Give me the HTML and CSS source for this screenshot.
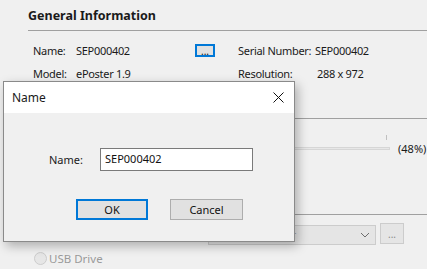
FILE: index.html
```html
<!DOCTYPE html>
<html lang="en">
<head>
    <meta charset="UTF-8">
    <title>Device settings</title>
    <link rel="stylesheet" href="styles.css">
</head>
<body>
    <div class="page">
        <h2 class="group-title">General Information</h2>
        <div class="info">
            <span class="label">Name:</span>
            <span class="value">SEP000402</span>
            <button class="dots focused">...</button>
            <span></span>
            <span class="label">Serial Number:</span>
            <span class="value">SEP000402</span>

            <span class="label">Model:</span>
            <span class="value">ePoster 1.9</span>
            <span></span>
            <span></span>
            <span class="label">Resolution:</span>
            <span class="value shifted">288 x 972</span>
        </div>

        <div class="divider first"></div>
        <div class="progress-row">
            <div class="track">
                <span class="tick"></span>
            </div>
            <span class="percent">(48%)</span>
        </div>

        <div class="divider"></div>
        <div class="select-row">
            <div class="select">
                <span>Images Folder</span>
                <svg width="10" height="6" viewBox="0 0 10 6"><path d="M1 1l4 4 4-4" fill="none" stroke="#6d6d6d" stroke-width="1"/></svg>
            </div>
            <button class="dots disabled">...</button>
        </div>
        <label class="radio">
            <span class="circle"></span>
            USB Drive
        </label>
    </div>

    <div class="dialog">
        <div class="dialog-title">
            <span>Name</span>
            <svg class="close" width="11" height="11" viewBox="0 0 11 11"><path d="M0.5 0.5l10 10M10.5 0.5l-10 10" stroke="#111" stroke-width="1"/></svg>
        </div>
        <div class="dialog-body">
            <div class="field">
                <span class="field-label">Name:</span>
                <input type="text" value="SEP000402">
            </div>
            <div class="buttons">
                <button class="btn default">OK</button>
                <button class="btn">Cancel</button>
            </div>
        </div>
    </div>
</body>
</html>
```

FILE: styles.css
```css
* {
    box-sizing: border-box;
}
body {
    margin: 0;
    background: #f0f0f0;
    font-family: "Noto Sans", sans-serif;
    font-size: 11px;
    color: #1a1a1a;
    overflow: hidden;
}
.page {
    padding-left: 28px;
    height: 269px;
}
.group-title {
    margin: 0;
    padding-top: 7px;
    height: 31px;
    font-size: 12.5px;
    line-height: 18px;
    font-weight: bold;
    border-bottom: 1px solid #a0a0a0;
}
.info {
    display: grid;
    grid-template-columns: 43px 119px 20px 23px 77px auto;
    grid-auto-rows: 23px;
    align-items: center;
    margin-top: 8px;
    padding-left: 5px;
    white-space: nowrap;
    letter-spacing: -0.3px;
}
.info .shifted {
    padding-left: 2px;
}
.dots {
    height: 13px;
    width: 20px;
    padding: 0;
    font: inherit;
    font-size: 10px;
    line-height: 8px;
    background: #e1e1e1;
    border: 1px solid #adadad;
    color: #111;
}
.dots.focused {
    border: 2px solid #0078d7;
}
.divider {
    border-bottom: 1px solid #a0a0a0;
}
.divider.first {
    margin-top: 33px;
}
.progress-row {
    display: flex;
    align-items: center;
    height: 95px;
    padding: 0 0 37px 74px;
}
.track {
    position: relative;
    width: 288px;
    height: 3px;
    background: #e7e7e7;
    border: 1px solid #d6d6d6;
}
.tick {
    position: absolute;
    right: 2px;
    top: -13px;
    width: 1px;
    height: 5px;
    background: #c0c0c0;
}
.percent {
    margin-left: 8px;
    white-space: nowrap;
}
.select-row {
    display: flex;
    align-items: center;
    margin-top: 8px;
    height: 21px;
    padding-left: 180px;
}
.select {
    width: 168px;
    height: 20px;
    border: 1px solid #cccccc;
    background: #e5e5e5;
    color: #a0a0a0;
    display: flex;
    align-items: center;
    justify-content: space-between;
    padding: 0 5px 0 13px;
    margin-top: 2px;
}
.dots.disabled {
    width: 24px;
    height: 21px;
    margin-left: 4px;
    border-color: #cccccc;
    background: #e5e5e5;
    color: #8a8a8a;
}
.radio {
    display: flex;
    align-items: center;
    gap: 2px;
    margin-top: 8px;
    height: 13px;
    padding-left: 6px;
    color: #9a9a9a;
    font-size: 11.5px;
}
.circle {
    width: 13px;
    height: 13px;
    border-radius: 50%;
    border: 1px solid #cccccc;
    background: #e6e6e6;
}

/* Modal dialog */
.dialog {
    position: absolute;
    left: 3px;
    top: 81px;
    width: 292px;
    height: 161px;
    border: 1px solid #8a8a8a;
    background: #f0f0f0;
    box-shadow: 3px 4px 10px rgba(0, 0, 0, 0.28);
}
.dialog-title {
    height: 31px;
    background: white;
    display: flex;
    align-items: center;
    justify-content: space-between;
    padding: 0 10px 0 8px;
    font-size: 12px;
}
.dialog-body {
    padding-top: 35px;
}
.field {
    display: flex;
    align-items: center;
    padding-left: 45px;
}
.field-label {
    width: 51px;
}
.field input {
    width: 153px;
    height: 23px;
    border: 1px solid #7a7a7a;
    padding: 0 0 2px 4px;
    font: inherit;
    color: #111;
    background: white;
    outline: none;
}
.buttons {
    display: flex;
    gap: 22px;
    margin-top: 28px;
    padding-left: 72px;
}
.btn {
    width: 73px;
    height: 21px;
    padding: 0;
    font: inherit;
    color: #111;
    background: #e1e1e1;
    border: 1px solid #adadad;
}
.btn.default {
    width: 72px;
    border: 2px solid #0078d7;
}
```
